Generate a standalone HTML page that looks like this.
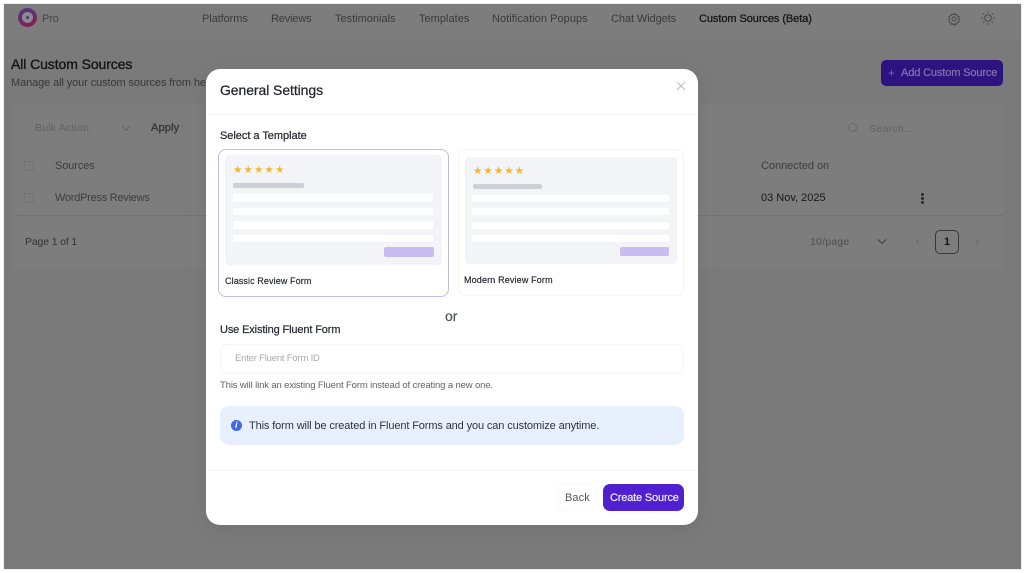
<!DOCTYPE html>
<html><head><meta charset="utf-8"><style>
html,body{margin:0;padding:0;width:1024px;height:573px;overflow:hidden;background:#fff;font-family:"Liberation Sans",sans-serif}
.t{position:absolute;white-space:nowrap;line-height:1}
.b{position:absolute;box-sizing:border-box}
#page{position:absolute;left:4px;top:4px;width:1017px;height:565px;background:#7a7a7a;overflow:hidden;box-shadow:0 0 1px #aaa}
#root{position:absolute;left:0;top:0;width:1024px;height:573px;filter:blur(.35px)}
.n{font-size:11px;color:#3a3a3a;top:14px}
</style></head><body>
<div id="root">
<div id="page"></div>
<div class="b" style="left:4px;top:4px;width:1017px;height:36px;background:#7d7d7d"></div>
<div class="b" style="left:18px;top:8px;width:19px;height:19px;border-radius:50%;background:linear-gradient(160deg,#4c3a86,#8e1a4a)"></div>
<div class="b" style="left:22px;top:12px;width:11px;height:11px;border-radius:50%;background:#8b8b92"></div>
<div class="b" style="left:26px;top:16px;width:3px;height:3px;border-radius:50%;background:#4a3a70"></div>
<span class="t n" style="left:42px;color:#444;letter-spacing:-.2px">Pro</span>
<span class="t n" style="left:202px;letter-spacing:-.08px">Platforms</span>
<span class="t n" style="left:271px;letter-spacing:-.15px">Reviews</span>
<span class="t n" style="left:335px;letter-spacing:0">Testimonials</span>
<span class="t n" style="left:419px;letter-spacing:.03px">Templates</span>
<span class="t n" style="left:492px;letter-spacing:.05px">Notification Popups</span>
<span class="t n" style="left:611px;letter-spacing:-.08px">Chat Widgets</span>
<span class="t n" style="left:699px;color:#161616;-webkit-text-stroke:.3px #161616;letter-spacing:-.07px">Custom Sources (Beta)</span>
<svg class="b" style="left:947px;top:12px" width="14" height="14" viewBox="0 0 14 14" fill="none" stroke="#444" stroke-width=".9"><path d="M7 1.500l1 1.300 1.700-.3.7 1.500 1.600.7-.3 1.600.8 1-.8 1.200.3 1.500-1.600.7-.7 1.500-1.700-.3-1 1.200-1-1.200-1.700.3-.7-1.500-1.600-.7.3-1.500L1.700 7l.8-1-.3-1.600 1.600-.7.7-1.500 1.700.3z"/><circle cx="7" cy="7" r="2"/></svg>
<svg class="b" style="left:980px;top:10px" width="16" height="16" viewBox="0 0 16 16" fill="none" stroke="#444" stroke-width=".9"><circle cx="8" cy="8" r="3.300"/><path d="M8 1v1.800M8 13.200V15M1 8h1.800M13.200 8H15M3 3l1.300 1.300M11.700 11.700L13 13M3 13l1.300-1.300M11.700 4.300L13 3"/></svg>

<span class="t" style="left:11px;top:57px;font-size:14px;color:#151515;-webkit-text-stroke:.35px #151515;letter-spacing:-.09px">All Custom Sources</span>
<span class="t" style="left:11px;top:78px;font-size:11px;color:#383838;letter-spacing:-.1px">Manage all your custom sources from here</span>
<div class="b" style="left:881px;top:60px;width:122px;height:26px;border-radius:5px;background:#2c1380"></div>
<span class="t" style="left:888px;top:67px;font-size:12px;color:#7568a6">+</span>
<span class="t" style="left:901px;top:68px;font-size:11px;color:#7e72ab;-webkit-text-stroke:.25px #7e72ab;letter-spacing:-.13px">Add Custom Source</span>

<div class="b" style="left:13px;top:104px;width:990px;height:164px;background:#7d7d7d"></div>
<span class="t" style="left:35px;top:123px;font-size:10.500px;color:#616161;letter-spacing:.2px">Bulk Action</span>
<svg class="b" style="left:121px;top:125px" width="10" height="7" fill="none" stroke="#5c5c5c" stroke-width=".8"><path d="M1 1.500l4 4 4-4"/></svg>
<div class="b" style="left:141px;top:116px;width:50px;height:26px;background:#7c7c7c"></div>
<span class="t" style="left:151px;top:123px;font-size:11px;color:#333;-webkit-text-stroke:.25px #333;letter-spacing:.15px">Apply</span>
<svg class="b" style="left:847px;top:122px" width="12" height="12" fill="none" stroke="#666" stroke-width=".8"><circle cx="5.500" cy="5.500" r="4"/><path d="M8.500 8.500l2 2"/></svg>
<span class="t" style="left:869px;top:124px;font-size:10.500px;color:#626262;letter-spacing:.3px">Search...</span>

<div class="b" style="left:24px;top:161px;width:10px;height:10px;border:1px solid #737373;border-radius:2px"></div>
<span class="t" style="left:55px;top:161px;font-size:11px;color:#3d3d3d;letter-spacing:-.1px">Sources</span>
<span class="t" style="left:761px;top:161px;font-size:11px;color:#3d3d3d;letter-spacing:-.03px">Connected on</span>
<div class="b" style="left:24px;top:193px;width:10px;height:10px;border:1px solid #737373;border-radius:2px"></div>
<span class="t" style="left:55px;top:193px;font-size:11px;color:#3d3d3d;letter-spacing:-.25px">WordPress Reviews</span>
<span class="t" style="left:761px;top:193px;font-size:11px;color:#181818;letter-spacing:0">03 Nov, 2025</span>
<div class="b" style="left:921px;top:193px;width:3px;height:3px;border-radius:50%;background:#2a2a2a"></div>
<div class="b" style="left:921px;top:197px;width:3px;height:3px;border-radius:50%;background:#2a2a2a"></div>
<div class="b" style="left:921px;top:201px;width:3px;height:3px;border-radius:50%;background:#2a2a2a"></div>
<div class="b" style="left:17px;top:215px;width:986px;height:1px;background:#717171"></div>
<span class="t" style="left:25px;top:237px;font-size:10.500px;color:#333;letter-spacing:-.15px">Page 1 of 1</span>
<span class="t" style="left:810px;top:237px;font-size:10.500px;color:#4d4d4d;letter-spacing:.2px">10/page</span>
<svg class="b" style="left:877px;top:238px" width="10" height="7" fill="none" stroke="#3a3a3a" stroke-width=".9"><path d="M1 1.500l4 4 4-4"/></svg>
<svg class="b" style="left:915px;top:238px" width="6" height="8" fill="none" stroke="#666" stroke-width=".8"><path d="M4.500 1L1.500 4l3 3"/></svg>
<div class="b" style="left:935px;top:230px;width:24px;height:24px;border:1px solid #383838;border-radius:5px"></div>
<span class="t" style="left:944px;top:237px;font-size:11px;font-weight:700;color:#151515">1</span>
<svg class="b" style="left:974px;top:238px" width="6" height="8" fill="none" stroke="#666" stroke-width=".8"><path d="M1.500 1l3 3-3 3"/></svg>

<!-- modal -->
<div class="b" style="left:206px;top:69px;width:492px;height:456px;background:#fff;border-radius:14px;box-shadow:0 4px 20px rgba(0,0,0,.08)"></div>
<span class="t" style="left:220px;top:83px;font-size:14px;color:#1d2330;letter-spacing:-.08px;-webkit-text-stroke:.25px #1d2330">General Settings</span>
<svg class="b" style="left:676px;top:81px" width="10" height="10" fill="none" stroke="#b8bac0" stroke-width=".9"><path d="M1 1l8 8M9 1L1 9"/></svg>
<div class="b" style="left:207px;top:114px;width:491px;height:1px;background:#f2f3f5"></div>
<span class="t" style="left:220px;top:131px;font-size:11px;color:#2a2e38;-webkit-text-stroke:.25px #2a2e38;letter-spacing:-.03px">Select a Template</span>

<div class="b" style="left:218px;top:149px;width:231px;height:148px;border:1px solid #c3bbe2;border-radius:8px"></div>
<div class="b" style="left:225px;top:155px;width:217px;height:110px;background:#f3f4f7;border-radius:4px"></div>
<span class="t" style="left:233px;top:165px;font-size:10.500px;color:#f5b62c;letter-spacing:1.1px">★★★★★</span>
<div class="b" style="left:233px;top:183px;width:71px;height:5px;background:#cdd0d6;border-radius:2px"></div>
<div class="b" style="left:233px;top:194px;width:200px;height:8px;background:#fff"></div>
<div class="b" style="left:233px;top:208px;width:200px;height:7px;background:#fff"></div>
<div class="b" style="left:233px;top:221px;width:200px;height:8px;background:#fff"></div>
<div class="b" style="left:233px;top:235px;width:200px;height:7px;background:#fff"></div>
<div class="b" style="left:384px;top:247px;width:50px;height:10px;background:#c9bcf0;border-radius:2px"></div>
<span class="t" style="left:225px;top:277px;font-size:9px;color:#2a2e38;letter-spacing:.1px;-webkit-text-stroke:.2px #2a2e38">Classic Review Form</span>

<div class="b" style="left:458px;top:149px;width:226px;height:147px;border:1px solid #f4f4f6;border-radius:8px"></div>
<div class="b" style="left:465px;top:157px;width:212px;height:107px;background:#f3f4f7;border-radius:4px"></div>
<span class="t" style="left:473px;top:166px;font-size:10.500px;color:#f5b62c;letter-spacing:1px">★★★★★</span>
<div class="b" style="left:473px;top:184px;width:69px;height:5px;background:#cdd0d6;border-radius:2px"></div>
<div class="b" style="left:472px;top:195px;width:197px;height:7px;background:#fff"></div>
<div class="b" style="left:472px;top:208px;width:197px;height:7px;background:#fff"></div>
<div class="b" style="left:472px;top:222px;width:197px;height:7px;background:#fff"></div>
<div class="b" style="left:472px;top:235px;width:197px;height:7px;background:#fff"></div>
<div class="b" style="left:620px;top:247px;width:49px;height:9px;background:#c9bcf0;border-radius:2px"></div>
<span class="t" style="left:464px;top:276px;font-size:9px;color:#2a2e38;letter-spacing:.15px;-webkit-text-stroke:.2px #2a2e38">Modern Review Form</span>

<span class="t" style="left:445px;top:309px;font-size:14px;color:#4b4f58;-webkit-text-stroke:.2px #4b4f58">or</span>
<span class="t" style="left:220px;top:325px;font-size:11px;color:#2a2e38;letter-spacing:-.13px;-webkit-text-stroke:.25px #2a2e38">Use Existing Fluent Form</span>
<div class="b" style="left:220px;top:344px;width:464px;height:30px;border:1px solid #f5f5f7;border-radius:7px"></div>
<span class="t" style="left:235px;top:354px;font-size:9.500px;color:#a9abb1;letter-spacing:-.2px">Enter Fluent Form ID</span>
<span class="t" style="left:220px;top:381px;font-size:9.500px;color:#5f636b;letter-spacing:-.13px">This will link an existing Fluent Form instead of creating a new one.</span>
<div class="b" style="left:220px;top:406px;width:464px;height:39px;background:#e9f0fd;border-radius:9px"></div>
<div class="b" style="left:231px;top:420px;width:11px;height:11px;border-radius:50%;background:#4169e1"></div>
<span class="t" style="left:235px;top:421px;font-size:9px;font-weight:700;font-style:italic;color:#fff">i</span>
<span class="t" style="left:249px;top:421px;font-size:11px;color:#2d3340;letter-spacing:-.12px">This form will be created in Fluent Forms and you can customize anytime.</span>
<div class="b" style="left:207px;top:470px;width:491px;height:1px;background:#f2f3f5"></div>
<div class="b" style="left:558px;top:484px;width:39px;height:27px;border:1px solid #f9f9fa;border-radius:6px"></div>
<span class="t" style="left:565px;top:493px;font-size:11px;color:#55585f;letter-spacing:.1px">Back</span>
<div class="b" style="left:603px;top:484px;width:81px;height:27px;background:#4f1fd0;border-radius:7px"></div>
<span class="t" style="left:610px;top:493px;font-size:11px;color:#f0edfb;letter-spacing:-.17px;-webkit-text-stroke:.2px #f0edfb">Create Source</span>
</div>
</body></html>
